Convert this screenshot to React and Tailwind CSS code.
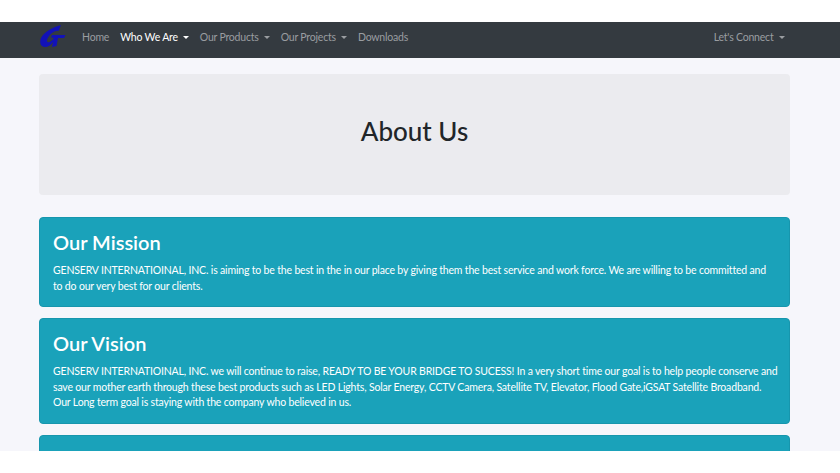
import React from 'react';

const Caret = () => (
  <span className="inline-block ml-[5px] align-[2px] w-0 h-0 border-x-[3px] border-x-transparent border-t-[3px] border-t-current" />
);

const NavItem = ({ label, active, caret }) => (
  <span className={`px-[5.5px] whitespace-nowrap ${active ? 'text-white' : 'text-[#9a9da1]'}`}>
    {label}
    {caret && <Caret />}
  </span>
);

const Logo = () => (
  <svg width="27" height="24" viewBox="0 0 27 24" className="block">
    <path
      d="M22 0 C14 2 5 7 2 13 C0 18 2 22 6 22 C9 22 12 20 14 17 L13 22 L17.500 21 L19 13 L25 13 L26.500 10 L13 10 L12 12.500 L15 13 C13 16 10 18 8.500 17 C7 16 9 11 13 8 C16 6 18 5.500 19.500 6 Z"
      fill="#1212b8"
    />
  </svg>
);

const InfoCard = ({ title, children, className }) => (
  <div className={`bg-[#1aa2ba] border border-[#1796ad] rounded-[4px] text-white pl-[13px] pr-[10px] ${className}`}>
    <h4 className="text-[20px] leading-[25px] font-semibold">{title}</h4>
    <p className="mt-[8px] text-[10.5px] leading-[15.5px] tracking-[-0.17px]">{children}</p>
  </div>
);

export default function App() {
  return (
    <div className="h-[473px] w-[840px] overflow-hidden bg-white font-['Lato',sans-serif]">
      <div className="h-[22px]" />
      <nav className="h-[36px] bg-[#343a40] flex items-start pl-[39px] pr-[50px] text-[10.5px] tracking-[-0.2px]">
        <div className="mt-[3px]">
          <Logo />
        </div>
        <div className="flex items-center mt-[8px] ml-[10.5px]">
          <NavItem label="Home" />
          <NavItem label="Who We Are" active caret />
          <NavItem label="Our Products" caret />
          <NavItem label="Our Projects" caret />
          <NavItem label="Downloads" />
        </div>
        <div className="ml-auto mt-[8px]">
          <NavItem label="Let's Connect" caret />
        </div>
      </nav>
      <main className="h-[393px] overflow-hidden bg-[#f6f6fb] pl-[39px] pr-[50px] pt-[16px]">
        <div className="h-[121px] bg-[#ebebef] rounded-[4px] flex items-center justify-center pb-[6px]">
          <h1 className="text-[26px] text-[#212529] font-medium">About Us</h1>
        </div>
        <InfoCard title="Our Mission" className="mt-[22px] h-[90px] pt-[12px]">
          GENSERV INTERNATIOINAL, INC. is aiming to be the best in the in our place by giving them the best service and work force. We are willing to be committed and
          <br />
          to do our very best for our clients.
        </InfoCard>
        <InfoCard title="Our Vision" className="mt-[11px] h-[106px] pt-[12px]">
          GENSERV INTERNATIOINAL, INC. we will continue to raise, READY TO BE YOUR BRIDGE TO SUCESS! In a very short time our goal is to help people conserve and
          <br />
          save our mother earth through these best products such as LED Lights, Solar Energy, CCTV Camera, Satellite TV, Elevator, Flood Gate,iGSAT Satellite Broadband.
          <br />
          Our Long term goal is staying with the company who believed in us.
        </InfoCard>
        <div className="mt-[11px] h-[40px] bg-[#1aa2ba] border border-[#1796ad] rounded-[4px]" />
      </main>
    </div>
  );
}
